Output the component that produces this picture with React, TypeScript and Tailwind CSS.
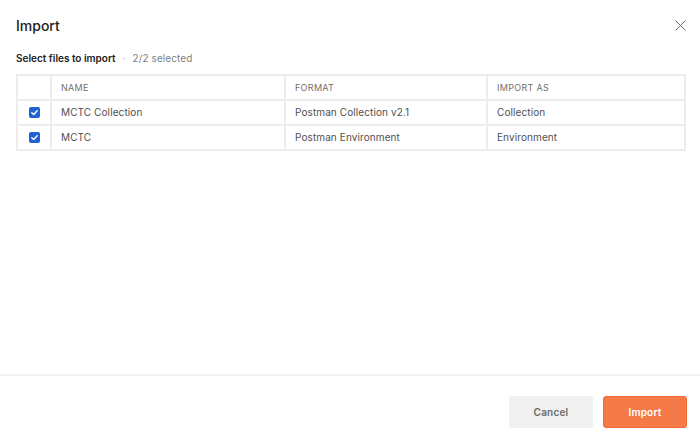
import React from "react";

const rows = [
  { name: "MCTC Collection", format: "Postman Collection v2.1", as: "Collection" },
  { name: "MCTC", format: "Postman Environment", as: "Environment" },
];

function Check() {
  return (
    <span className="inline-flex w-[11px] h-[11px] rounded-[2px] bg-[#1f63d3] items-center justify-center">
      <svg width="9" height="9" viewBox="0 0 10 10" fill="none">
        <path d="M2 5.2 L4.1 7.2 L8 3" stroke="white" strokeWidth="1.6" strokeLinecap="round" strokeLinejoin="round" />
      </svg>
    </span>
  );
}

export default function App() {
  return (
    <div
      className="w-[700px] h-[441px] bg-white flex flex-col text-[#333]"
      style={{ fontFamily: "Inter, 'Noto Sans', sans-serif" }}
    >
      <div className="flex items-center justify-between pl-4 pr-[14px] pt-[14px]">
        <div className="text-[14px] leading-6 font-medium text-[#212121]">Import</div>
        <svg width="11" height="11" viewBox="0 0 11 11" className="mt-[-2px]">
          <path d="M0.5 0.5 L10.5 10.5 M10.5 0.5 L0.5 10.5" stroke="#6b6b6b" strokeWidth="1" />
        </svg>
      </div>
      <div className="pl-4 mt-3 text-[10px] leading-4 flex items-center">
        <span className="font-semibold text-[#212121]">Select files to import</span>
        <span className="mx-[7px] text-[#a6a6a6]">·</span>
        <span className="text-[#7f7f7f] tracking-[0.1px]">2/2 selected</span>
      </div>
      <div className="pl-4 pr-[14px] mt-2">
        <table className="w-[670px] border-collapse border-2 border-[#ededed] text-[10px] table-fixed">
          <colgroup>
            <col className="w-[34px]" />
            <col className="w-[234px]" />
            <col className="w-[202px]" />
            <col />
          </colgroup>
          <thead>
            <tr className="h-[25px]">
              <th className="border-2 border-[#ededed]"></th>
              <th className="border-2 border-[#ededed] text-left font-normal text-[9px] text-[#707070] pl-[9px] tracking-[0.3px]">NAME</th>
              <th className="border-2 border-[#ededed] text-left font-normal text-[9px] text-[#707070] pl-[9px] tracking-[0.3px]">FORMAT</th>
              <th className="border-2 border-[#ededed] text-left font-normal text-[9px] text-[#707070] pl-[9px] tracking-[0.3px]">IMPORT AS</th>
            </tr>
          </thead>
          <tbody>
            {rows.map((r) => (
              <tr key={r.name} className="h-[25px]">
                <td className="border-2 border-[#ededed] text-center align-middle">
                  <div className="flex justify-center items-center pl-[1px]">
                    <Check />
                  </div>
                </td>
                <td className="border-2 border-[#ededed] pl-[9px] text-[#505050] tracking-[0.1px]">{r.name}</td>
                <td className="border-2 border-[#ededed] pl-[9px] text-[#505050] tracking-[0.1px]">{r.format}</td>
                <td className="border-2 border-[#ededed] pl-[9px] text-[#505050] tracking-[0.1px]">{r.as}</td>
              </tr>
            ))}
          </tbody>
        </table>
      </div>
      <div className="flex-1" />
      <div className="border-t-2 border-[#f2f2f2] h-[67px] flex justify-end items-start pt-[20px] pr-[13px] gap-[10px]">
        <button className="w-[84px] h-[32px] rounded-[3px] bg-[#f0f0f0] text-[10px] font-semibold text-[#6b6b6b] tracking-[0.2px]">
          Cancel
        </button>
        <button className="w-[84px] h-[32px] rounded-[3px] bg-[#f47a47] border border-[#f06a2e] text-[10px] font-semibold text-white tracking-[0.2px]">
          Import
        </button>
      </div>
    </div>
  );
}
